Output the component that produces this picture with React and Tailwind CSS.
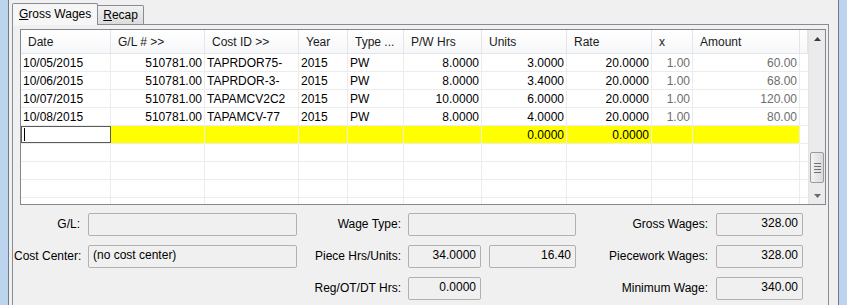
import React from 'react';

const cols = [
  { key: 'date', label: 'Date', w: 'w-[90px]', align: 'text-left' },
  { key: 'gl', label: 'G/L # >>', w: 'w-[94px]', align: 'text-right' },
  { key: 'cost', label: 'Cost ID >>', w: 'w-[94px]', align: 'text-left' },
  { key: 'year', label: 'Year', w: 'w-[49px]', align: 'text-left' },
  { key: 'type', label: 'Type ...', w: 'w-[56px]', align: 'text-left' },
  { key: 'pw', label: 'P/W Hrs', w: 'w-[78px]', align: 'text-right' },
  { key: 'units', label: 'Units', w: 'w-[85px]', align: 'text-right' },
  { key: 'rate', label: 'Rate', w: 'w-[85px]', align: 'text-right' },
  { key: 'x', label: 'x', w: 'w-[41px]', align: 'text-right', gray: true },
  { key: 'amount', label: 'Amount', w: 'w-[107px]', align: 'text-right', gray: true },
];

const rows = [
  { date: '10/05/2015', gl: '510781.00', cost: 'TAPRDOR75-', year: '2015', type: 'PW', pw: '8.0000', units: '3.0000', rate: '20.0000', x: '1.00', amount: '60.00' },
  { date: '10/06/2015', gl: '510781.00', cost: 'TAPRDOR-3-', year: '2015', type: 'PW', pw: '8.0000', units: '3.4000', rate: '20.0000', x: '1.00', amount: '68.00' },
  { date: '10/07/2015', gl: '510781.00', cost: 'TAPAMCV2C2', year: '2015', type: 'PW', pw: '10.0000', units: '6.0000', rate: '20.0000', x: '1.00', amount: '120.00' },
  { date: '10/08/2015', gl: '510781.00', cost: 'TAPAMCV-77', year: '2015', type: 'PW', pw: '8.0000', units: '4.0000', rate: '20.0000', x: '1.00', amount: '80.00' },
];

function Header() {
  return (
    <div className="flex shrink-0 h-[24px] bg-gradient-to-b from-white to-[#f6f7f9] border-b border-[#e3e5e8]">
      {cols.map((c) => (
        <div key={c.key} className={`${c.w} shrink-0 border-r border-[#e3e5e8] pl-[7px] pt-[2px] flex items-center text-[#1a1a1a] whitespace-nowrap`}>
          {c.label}
        </div>
      ))}
      <div className="w-[8px] shrink-0 border-r border-[#e3e5e8]" />
    </div>
  );
}

function DataRow({ row }) {
  return (
    <div className="flex shrink-0 h-[18px] border-b border-[#ececec]">
      {cols.map((c) => (
        <div
          key={c.key}
          className={`${c.w} shrink-0 border-r border-[#ececec] px-[2px] leading-[18px] ${c.align} whitespace-nowrap overflow-hidden ${c.gray ? 'text-[#6d6d6d]' : 'text-black'}`}
        >
          {row[c.key]}
        </div>
      ))}
      <div className="w-[8px] shrink-0" />
    </div>
  );
}

function NewRow() {
  return (
    <div className="flex shrink-0 h-[18px] border-b border-[#ececec]">
      <div className="w-[90px] shrink-0 bg-white border border-[#5a5a5a] flex items-center pl-[2px]">
        <div className="w-px h-[13px] bg-black" />
      </div>
      {cols.slice(1).map((c) => (
        <div key={c.key} className={`${c.w} shrink-0 bg-[#ffff00] border-r border-[#ececec] px-[2px] leading-[18px] ${c.align} text-black`}>
          {c.key === 'units' || c.key === 'rate' ? '0.0000' : ''}
        </div>
      ))}
      <div className="w-[8px] shrink-0" />
    </div>
  );
}

function EmptyRow() {
  return (
    <div className="flex h-[18px] border-b border-[#ececec] shrink-0">
      {cols.map((c) => (
        <div key={c.key} className={`${c.w} shrink-0 border-r border-[#ececec]`} />
      ))}
      <div className="w-[8px] shrink-0" />
    </div>
  );
}

function ScrollBar() {
  return (
    <div className="w-[17px] shrink-0 bg-[#ebebeb] border-l border-[#e4e4e4] flex flex-col items-center">
      <div className="h-[17px] shrink-0 w-full flex items-center justify-center">
        <svg width="7" height="4" viewBox="0 0 7 4"><path d="M0 4 L3.5 0 L7 4 Z" fill="#3c3c3c" /></svg>
      </div>
      <div className="flex-1 w-full flex flex-col justify-end">
        <div className="mx-[1px] h-[31px] rounded-[2px] border border-[#9a9a9a] bg-gradient-to-r from-[#f3f3f3] to-[#d9d9d9] flex flex-col items-center justify-center gap-[2px]">
          <div className="w-[7px] h-px bg-[#707070]" />
          <div className="w-[7px] h-px bg-[#707070]" />
          <div className="w-[7px] h-px bg-[#707070]" />
          <div className="w-[7px] h-px bg-[#707070]" />
        </div>
        <div className="h-[4px]" />
      </div>
      <div className="h-[17px] shrink-0 w-full flex items-center justify-center">
        <svg width="7" height="4" viewBox="0 0 7 4"><path d="M0 0 L7 0 L3.5 4 Z" fill="#6b6b6b" /></svg>
      </div>
    </div>
  );
}

function Field({ w, value, align = 'text-right' }) {
  return (
    <div className={`${w} h-[23px] shrink-0 rounded-[2px] border border-[#b1b1b1] bg-[#f0f0f0] px-[4px] pt-[2px] ${align} text-black whitespace-nowrap`}>
      {value}
    </div>
  );
}

function Label({ w, children }) {
  return <div className={`${w} shrink-0 text-right text-black whitespace-nowrap`}>{children}</div>;
}

export default function App() {
  return (
    <div className="w-[847px] h-[305px] flex bg-[#f0f0f0] overflow-hidden font-['Liberation_Sans',sans-serif] text-[12px] leading-[15px]">
      <div className="w-[9px] shrink-0 bg-[#bcd4ee] border-r border-[#707b88]" />
      <div className="w-[829px] shrink-0 flex flex-col pl-[3px]">
        <div className="h-[24px] shrink-0 flex items-end relative z-10">
          <div className="h-[22px] -mb-px px-[6px] flex items-center bg-[#f6f6f6] border border-b-0 border-[#898c95] rounded-t-[2px] text-black">
            <span><u>G</u>ross Wages</span>
          </div>
          <div className="h-[19px] px-[5px] flex items-center bg-gradient-to-b from-[#f2f2f2] to-[#dcdcdc] border border-l-0 border-b-0 border-[#898c95] rounded-tr-[2px] text-black">
            <span><u>R</u>ecap</span>
          </div>
        </div>
        <div className="w-[817px] flex-1 border border-b-0 border-[#898c95] bg-[#f0f0f0] pt-[4px] pl-[7px]">
          <div className="w-[806px] h-[176px] border border-[#828790] bg-white flex overflow-hidden">
            <div className="w-[787px] shrink-0 flex flex-col overflow-hidden">
              <Header />
              {rows.map((r) => (
                <DataRow key={r.date} row={r} />
              ))}
              <NewRow />
              <EmptyRow />
              <EmptyRow />
              <EmptyRow />
              <EmptyRow />
            </div>
            <ScrollBar />
          </div>

          <div className="mt-[8px] -ml-[6px] flex flex-col gap-[9px]">
            <div className="flex items-center">
              <Label w="w-[66px]">G/L:</Label>
              <div className="ml-[8px]"><Field w="w-[209px]" value="" /></div>
              <Label w="w-[104px]">Wage Type:</Label>
              <div className="ml-[7px]"><Field w="w-[168px]" value="" /></div>
              <Label w="w-[132px]">Gross Wages:</Label>
              <div className="ml-[8px]"><Field w="w-[87px]" value="328.00" /></div>
            </div>
            <div className="flex items-center">
              <Label w="w-[66px]">Cost Center:</Label>
              <div className="ml-[8px]"><Field w="w-[209px]" value="(no cost center)" align="text-left" /></div>
              <Label w="w-[104px]">Piece Hrs/Units:</Label>
              <div className="ml-[7px] w-[168px] flex gap-[8px]">
                <Field w="w-[73px]" value="34.0000" />
                <Field w="w-[87px]" value="16.40" />
              </div>
              <Label w="w-[132px]">Piecework Wages:</Label>
              <div className="ml-[8px]"><Field w="w-[87px]" value="328.00" /></div>
            </div>
            <div className="flex items-center">
              <div className="w-[66px] shrink-0" />
              <div className="ml-[8px] w-[209px] shrink-0" />
              <Label w="w-[104px]">Reg/OT/DT Hrs:</Label>
              <div className="ml-[7px] w-[168px]"><Field w="w-[73px]" value="0.0000" /></div>
              <Label w="w-[132px]">Minimum Wage:</Label>
              <div className="ml-[8px]"><Field w="w-[87px]" value="340.00" /></div>
            </div>
          </div>
        </div>
      </div>
      <div className="flex-1 border-l border-[#707b88] bg-[#bcd4ee]" />
    </div>
  );
}
